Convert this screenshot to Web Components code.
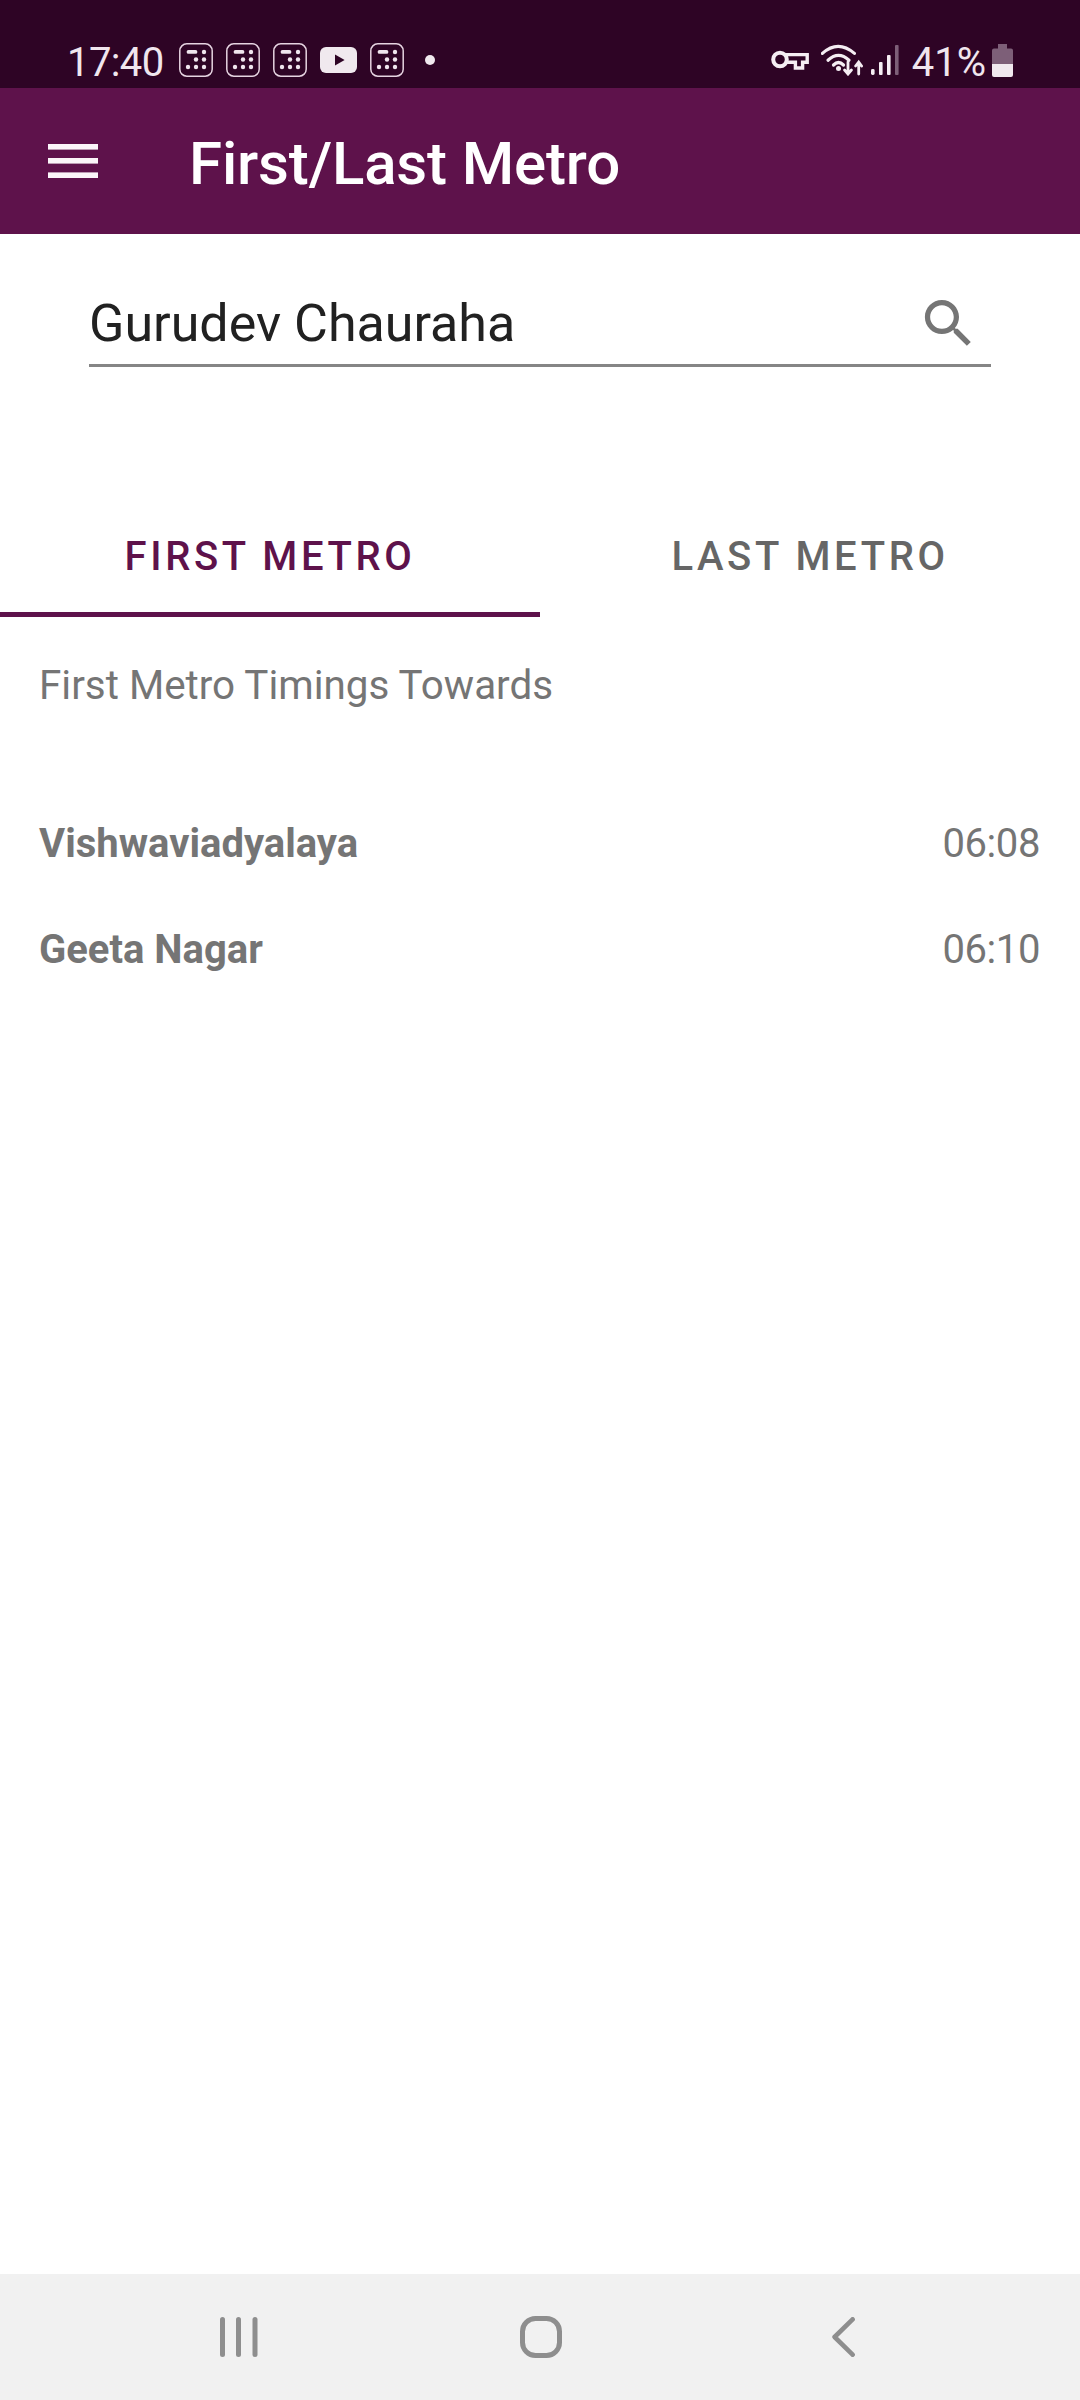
<!DOCTYPE html>
<html lang="en">
<head>
<meta charset="utf-8">
<title>First/Last Metro</title>
<style>
  html, body { margin: 0; padding: 0; background: #fff; }
  body { font-family: Roboto, "Noto Sans", sans-serif; }
  #page { display: flex; flex-direction: column; width: 1080px; height: 2400px; }
</style>
</head>
<body>
<div id="page">
  <status-bar>
    <note-icon></note-icon>
    <note-icon></note-icon>
    <note-icon></note-icon>
    <yt-icon></yt-icon>
    <note-icon></note-icon>
  </status-bar>
  <app-bar>First/Last Metro</app-bar>
  <search-field value="Gurudev Chauraha"></search-field>
  <metro-tabs></metro-tabs>
  <timing-list heading="First Metro Timings Towards">
    <timing-row station="Vishwaviadyalaya" time="06:08"></timing-row>
    <timing-row station="Geeta Nagar" time="06:10"></timing-row>
  </timing-list>
  <nav-bar></nav-bar>
</div>

<script>
// small helper, every component is just a class with a template string
function define(name, html) {
  const tpl = document.createElement('template');
  tpl.innerHTML = html;
  customElements.define(name, class extends HTMLElement {
    connectedCallback() {
      if (this.shadowRoot) return;
      this.attachShadow({ mode: 'open' });
      this.shadowRoot.appendChild(tpl.content.cloneNode(true));
      this.shadowRoot.querySelectorAll('[data-attr]').forEach((el) => {
        el.textContent = this.getAttribute(el.dataset.attr);
      });
    }
  });
}

// ── Status bar ──────────────────────────────────────────────

define('note-icon', `
<style>
  :host { display: block; width: 34px; height: 34px; }
  svg { display: block; }
</style>
<svg width="34" height="34" viewBox="0 0 34 34" fill="#f0e6ee">
  <rect x=".8" y=".8" width="32.4" height="32.4" rx="7" fill="none" stroke="#e6d4e1" stroke-width="1.5"/>
  <rect x="7.6" y="7" width="10.8" height="3.8" rx="1.9"/>
  <circle cx="25" cy="9" r="2.2"/>
  <circle cx="17" cy="16.5" r="2.2"/><circle cx="25" cy="16.5" r="2.2"/>
  <circle cx="9" cy="24" r="2.2"/><circle cx="17" cy="24" r="2.2"/><circle cx="25" cy="24" r="2.2"/>
</svg>`);

define('yt-icon', `
<style>
  :host { display: block; width: 37px; height: 26px; }
  svg { display: block; }
</style>
<svg width="37" height="26" viewBox="0 0 37 26">
  <rect width="37" height="26" rx="6" fill="#f0e9ee"/>
  <path d="M15 7.6 L24.6 13 L15 18.4 Z" fill="#2e0425"/>
</svg>`);

define('status-bar', `
<style>
  :host {
    display: flex;
    flex: none;
    align-items: center;
    box-sizing: border-box;
    height: 88px;
    padding: 32px 0 0 67px;
    background: #2e0425;
    color: #f0e6ee;
    font-size: 40px;
    line-height: 56px;
  }
  .time { letter-spacing: -.6px; margin-top: 5px; }
  .left { display: flex; align-items: center; gap: 13px; margin-left: 15px; }
  .dot { width: 10px; height: 10px; border-radius: 50%; background: #f0e9ee; margin-left: 8px; }
  .right { display: flex; align-items: center; margin-left: auto; padding-right: 67px; }
  .right svg { display: block; }
  .pct { margin: 5px 6px 0 13px; }
</style>
<span class="time">17:40</span>
<div class="left"><slot></slot><span class="dot"></span></div>
<div class="right">
  <svg width="38" height="20" viewBox="0 0 38 20" fill="none" stroke="#f5eef3">
    <circle cx="9" cy="9.5" r="6.8" stroke-width="4"/>
    <path d="M15 4.6H36.2V12.2H31.6V18H24.4V12.2H15" stroke-width="3.4"/>
  </svg>
  <svg style="margin-left:12px" width="42" height="32" viewBox="0 0 42 32" fill="none" stroke="#f5eef3" stroke-width="3.2" stroke-linecap="round">
    <path d="M1.4 9.4Q17 -4.6 33.4 9.4"/>
    <path d="M7 16.2Q17.5 6.6 28 16.2"/>
    <path d="M12.5 21Q17.5 16 22.5 21"/>
    <circle cx="17.5" cy="24.6" r="2.5" fill="#f5eef3" stroke="none"/>
    <path d="M27 18V29.5M23.6 26L27 30L30.4 26" stroke-width="2.8"/>
    <path d="M37.7 30V18.5M34.6 22L37.7 18L40.6 22" stroke-width="2.8"/>
  </svg>
  <svg style="margin-left:8px" width="28" height="30" viewBox="0 0 28 30">
    <rect x="0" y="24" width="3.6" height="6" rx="1.4" fill="#f5eef3"/>
    <rect x="8" y="17" width="3.6" height="13" rx="1" fill="#f5eef3"/>
    <rect x="16" y="10" width="3.6" height="20" rx="1" fill="#f5eef3"/>
    <rect x="24" y="0" width="3.6" height="30" rx="1" fill="#7d5f78"/>
  </svg>
  <span class="pct">41%</span>
  <svg width="21" height="33" viewBox="0 0 21 33">
    <path d="M6 0H15V4.4H19A2 2 0 0 1 21 6.4V20H0V6.4A2 2 0 0 1 2 4.4H6Z" fill="#7d5f78"/>
    <path d="M0 20H21V31A2 2 0 0 1 19 33H2A2 2 0 0 1 0 31Z" fill="#f0e9ee"/>
  </svg>
</div>`);

// ── App bar ─────────────────────────────────────────────────

define('app-bar', `
<style>
  :host {
    display: flex;
    flex: none;
    align-items: center;
    height: 146px;
    box-sizing: border-box;
    padding: 5px 0 0 48px;
    background: #5e124b;
    color: #fff;
    font-size: 60px;
    font-weight: 500;
    letter-spacing: -.15px;
  }
  svg { display: block; margin: 0 91px 5px 0; }
</style>
<svg width="50" height="34" viewBox="0 0 50 34" fill="#fbf5f9">
  <rect width="50" height="5.6"/>
  <rect y="14" width="50" height="5.6"/>
  <rect y="28.4" width="50" height="5.6"/>
</svg>
<slot></slot>`);

// ── Search ──────────────────────────────────────────────────

define('search-field', `
<style>
  :host {
    display: flex;
    flex: none;
    align-items: center;
    justify-content: space-between;
    box-sizing: border-box;
    width: 902px;
    height: 74px;
    margin: 59px 0 0 89px;
    border-bottom: 3px solid #858585;
    color: #212121;
    font-size: 52px;
  }
  span { margin-bottom: 10px; }
  svg { display: block; margin: 0 11px 10px 0; }
</style>
<span data-attr="value"></span>
<svg width="63" height="63" viewBox="0 0 24 24" fill="#757575">
  <path d="M15.5 14h-.79l-.28-.27C15.41 12.59 16 11.11 16 9.5 16 5.91 13.09 3 9.5 3S3 5.91 3 9.5 5.91 16 9.5 16c1.61 0 3.09-.59 4.23-1.57l.27.28v.79l5 4.99L20.49 19l-4.99-5zm-6 0C7.01 14 5 11.99 5 9.5S7.01 5 9.5 5 14 7.01 14 9.5 11.99 14 9.5 14z"/>
</svg>`);

// ── Tabs ────────────────────────────────────────────────────

define('metro-tabs', `
<style>
  :host {
    display: grid;
    flex: none;
    grid-template-columns: 1fr 1fr;
    margin-top: 140px;
    font-size: 40px;
    font-weight: 500;
    letter-spacing: 3.6px;
    text-align: center;
  }
  .tab { height: 110px; line-height: 100px; box-sizing: border-box; color: #666; }
  .tab.on { color: #5e124b; border-bottom: 5px solid #5e124b; }
</style>
<div class="tab on">FIRST METRO</div>
<div class="tab">LAST METRO</div>`);

// ── Timings ─────────────────────────────────────────────────

define('timing-list', `
<style>
  :host {
    display: flex;
    flex: 1;
    flex-direction: column;
    padding: 39px 40px 0 39px;
    color: #757575;
    font-size: 40.4px;
  }
  .head { line-height: 60px; margin-bottom: 98px; }
  .rows { display: flex; flex-direction: column; gap: 46px; }
</style>
<div class="head" data-attr="heading"></div>
<div class="rows"><slot></slot></div>`);

define('timing-row', `
<style>
  :host {
    display: flex;
    justify-content: space-between;
    line-height: 60px;
    font-size: 40px;
    color: #757575;
  }
  b { font-weight: 700; }
  span { letter-spacing: -.4px; }
</style>
<b data-attr="station"></b>
<span data-attr="time"></span>`);

// ── Navigation bar ──────────────────────────────────────────

define('nav-bar', `
<style>
  :host {
    display: flex;
    flex: none;
    align-items: center;
    justify-content: space-between;
    box-sizing: border-box;
    height: 126px;
    padding: 0 225px 0 220px;
    background: #f1f1f1;
  }
  svg { display: block; }
  .home { margin-right: 8px; }
</style>
<svg width="38" height="40" viewBox="0 0 38 40" fill="#8e8e8e">
  <rect width="5" height="40" rx="2.5"/>
  <rect x="16" width="5" height="40" rx="2.5"/>
  <rect x="32.5" width="5" height="40" rx="2.5"/>
</svg>
<svg class="home" width="42" height="42" viewBox="0 0 42 42" fill="none" stroke="#8e8e8e" stroke-width="5">
  <rect x="2.5" y="2.5" width="37" height="37" rx="13"/>
</svg>
<svg width="23" height="40" viewBox="0 0 23 40" fill="none" stroke="#8e8e8e" stroke-width="4.6" stroke-linecap="round" stroke-linejoin="round">
  <path d="M20.6 2.3 L2.6 20 L20.6 37.7"/>
</svg>`);
</script>
</body>
</html>
